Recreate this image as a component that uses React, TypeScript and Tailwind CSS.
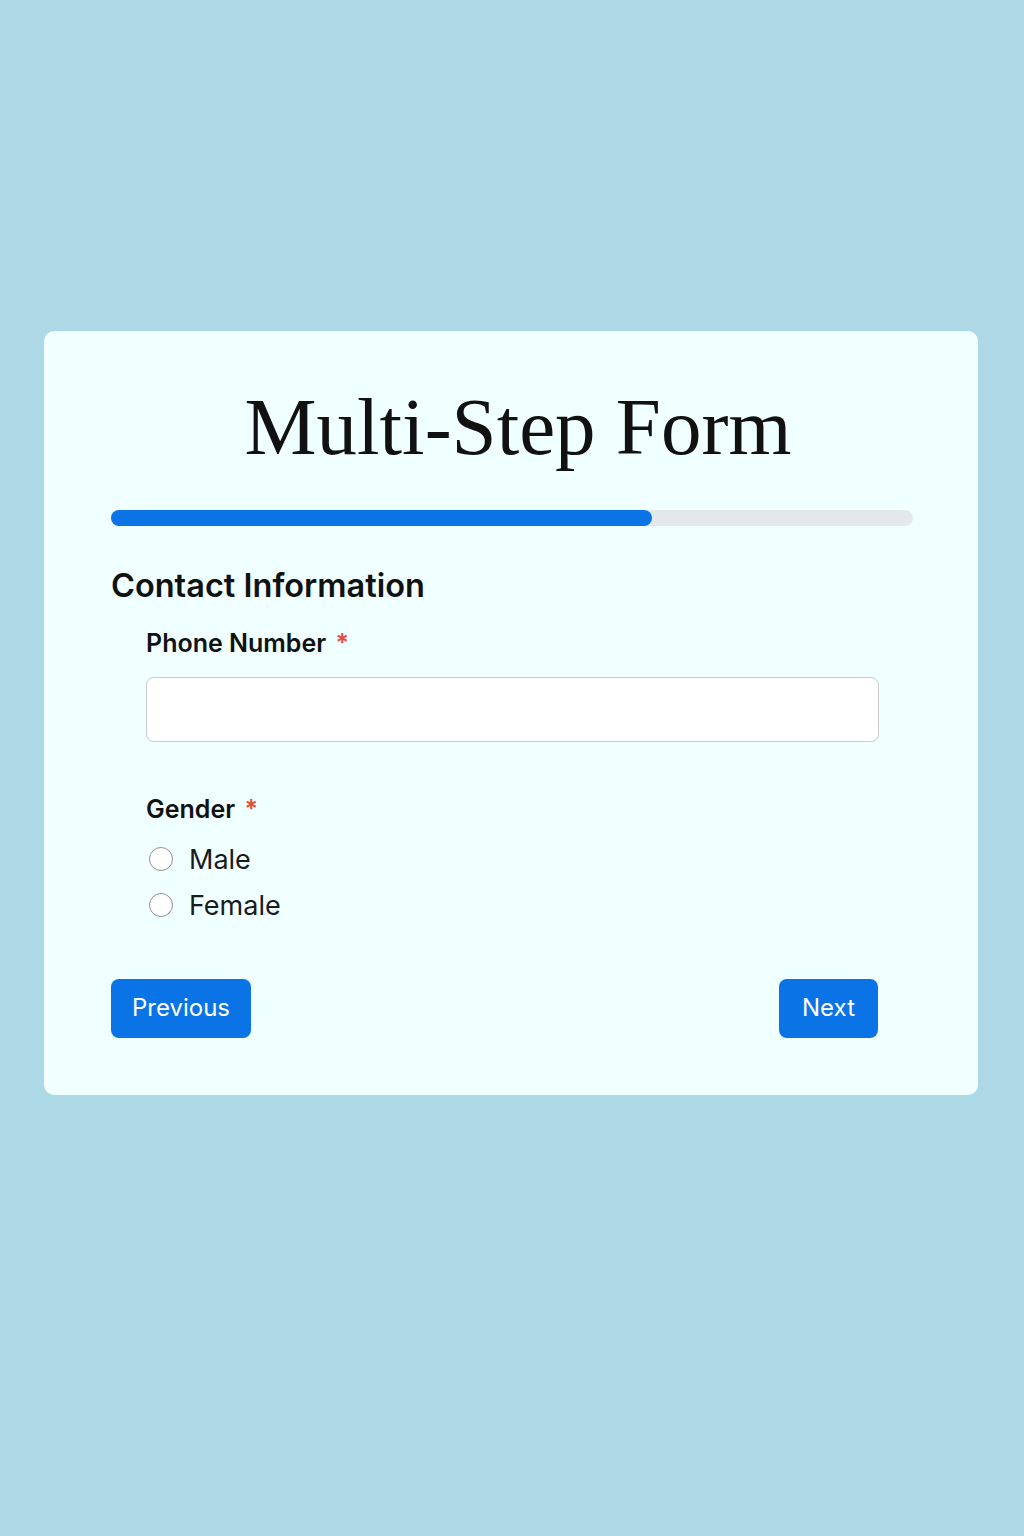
import React from "react";

export default function App() {
  const progress = 67.5;
  return (
    <div className="min-h-[1536px] w-[1024px] bg-[#add8e6] pt-[331px]" style={{ fontFamily: "Inter, 'Liberation Sans', sans-serif" }}>
      <div className="ml-[44px] mr-[46px] rounded-[10px] bg-[#f0ffff] pl-[67px] pr-[65px] pt-[56px] pb-[57px]">
        <h1 className="pl-[12px] text-center text-[81px] leading-none text-[#111]" style={{ fontFamily: "'Liberation Serif', serif" }}>
          Multi-Step Form
        </h1>
        <div className="mt-[42px] h-[16px] w-full rounded-full bg-[#e3e9ea]">
          <div className="h-full rounded-full bg-[#0a74e6]" style={{ width: `${progress}%` }} />
        </div>
        <h2 className="mt-[44px] text-[32.5px] font-semibold leading-none text-[#111]">Contact Information</h2>
        <div className="pl-[35px] pr-[34px]">
          <label className="mt-[28px] block text-[25px] font-semibold leading-none text-[#111]">
            Phone Number <span className="ml-[3px] text-[#e74c3c]">*</span>
          </label>
          <input type="tel" className="mt-[21px] block h-[65px] w-full rounded-[8px] border border-[#c8cccc] bg-white px-4 text-[24px] outline-none" />
          <div className="mt-[55px] text-[25px] font-semibold leading-none text-[#111]">
            Gender <span className="ml-[3px] text-[#e74c3c]">*</span>
          </div>
          <div className="mt-[24px] flex flex-col gap-[19px]">
            {["Male", "Female"].map((g) => (
              <label key={g} className="flex items-center gap-[16px] text-[27px] leading-none text-[#1a1a1a]">
                <span className="ml-[3px] box-border h-[24px] w-[24px] rounded-full border-[1.5px] border-[#8f8f8f] bg-white" />
                {g}
              </label>
            ))}
          </div>
        </div>
        <div className="mt-[60px] flex items-center justify-between pr-[34px]">
          <button className="h-[59px] rounded-[8px] bg-[#0a74e6] px-[21px] text-[24px] text-white">Previous</button>
          <button className="mr-[1px] h-[59px] rounded-[8px] bg-[#0a74e6] px-[23px] text-[24px] text-white">Next</button>
        </div>
      </div>
    </div>
  );
}
